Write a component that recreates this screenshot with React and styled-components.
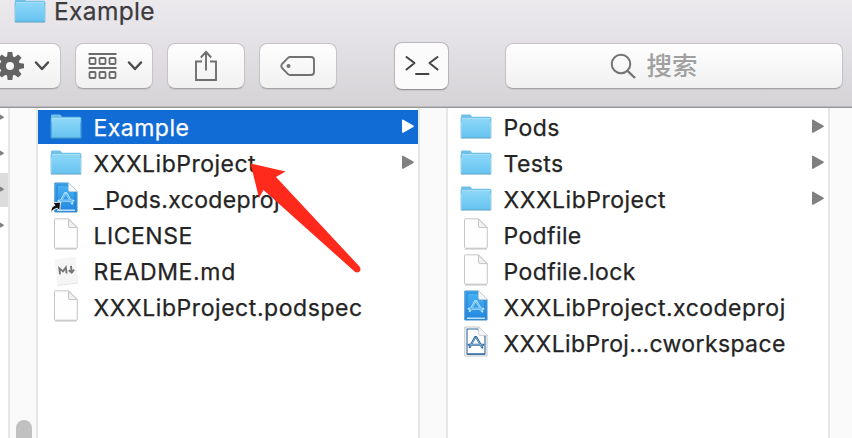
import React from "react";
import styled, { createGlobalStyle } from "styled-components";

const GlobalStyle = createGlobalStyle`
  * { box-sizing: border-box; }
  body { margin: 0; overflow: hidden; background: #fff; font-family: Inter, "Noto Sans CJK SC", sans-serif; }
  svg { display: block; flex: none; }
`;

const Window = styled.div`
  position: relative;
  width: 852px;
  height: 438px;
  overflow: hidden;
  display: flex;
  flex-direction: column;
  background: #fff;
`;

const Header = styled.header`
  flex: none;
  height: 108px;
  overflow: hidden;
  background: linear-gradient(#ebe9ec 0, #e6e4e8 30px, #d5d3d6 106px);
  border-bottom: 1px solid #979698;
  box-shadow: inset 0 -1px #bbb9bc;
`;

const TitleBar = styled.div`
  display: flex;
  align-items: flex-start;
  gap: 6px;
  height: 26px;
  padding-left: 14px;
  > svg { margin-top: -6px; }
`;

const Title = styled.span`
  font-size: 24.5px;
  line-height: 23px;
  letter-spacing: 0.35px;
  color: #3d3b3e;
  -webkit-text-stroke: 0.25px currentColor;
`;

const Toolbar = styled.div`
  display: flex;
  align-items: center;
  width: 860px;
  height: 48px;
  margin: 16px 0 0 -17px;
`;

const ToolButton = styled.div`
  display: flex;
  align-items: center;
  justify-content: center;
  flex: none;
  width: 78px;
  height: 46px;
  margin-right: 14px;
  border: 1px solid #c6c4c7;
  border-bottom-color: #a5a3a6;
  border-radius: 8px;
  background: linear-gradient(#fefefe, #f1f1f1);
  box-shadow: 0 1px 1px rgba(0, 0, 0, 0.08);
`;

const MenuButton = styled(ToolButton)`
  gap: 10px;
  padding-left: 2px;
`;

const TerminalButton = styled(ToolButton)`
  width: 55px;
  height: 48px;
  margin: 0 56px 0 43px;
  background: #fbfbfb;
  border-color: #b8b6b9;
  border-bottom-color: #949295;
`;

const SearchField = styled(ToolButton)`
  width: 338px;
  margin: 0;
  padding-right: 40px;
  gap: 10px;
  font-size: 25.500px;
  line-height: 30px;
  font-weight: 500;
  color: #a0a0a0;
  span { margin-top: -1px; }
`;

const Browser = styled.main`
  flex: 1;
  min-height: 0;
  display: flex;
`;

const Column = styled.section`
  flex: none;
  width: ${(p) => p.$width}px;
  padding-top: 2px;
  display: flex;
  flex-direction: column;
  gap: 2px;
  overflow: hidden;
`;

const EdgeColumn = styled(Column)`
  padding-top: 0;
  > :first-child { margin-top: -7px; }
`;

const Gutter = styled.div`
  flex: none;
  display: flex;
  flex-direction: column;
  justify-content: flex-end;
  width: 30px;
  padding-left: 6px;
  border: solid #e7e7e7;
  border-width: 0 2px;
  background: #fafafa;
`;

const ScrollThumb = styled.div`
  width: 16px;
  height: 18px;
  border-radius: 8px 8px 0 0;
  background: #c1c1c1;
`;

const Row = styled.div`
  flex: none;
  display: flex;
  align-items: center;
  height: 34px;
  padding: 0 4px 0 12px;
  color: ${(p) => (p.$selected ? "#fff" : "#242424")};
  background: ${(p) => (p.$selected ? "#116cd6" : "transparent")};
`;

const EdgeRow = styled.div`
  flex: none;
  display: flex;
  justify-content: flex-end;
  align-items: center;
  height: 34px;
  padding-right: 4px;
  background: ${(p) => (p.$selected ? "#dcdcdc" : "transparent")};
`;

const Label = styled.span`
  flex: 1;
  padding-top: 2px;
  margin-left: 9.5px;
  font-size: 23px;
  line-height: 34px;
  letter-spacing: ${(p) => p.$spacing}px;
  white-space: nowrap;
  -webkit-text-stroke: 0.25px currentColor;
`;

const PointerArrow = styled.svg`
  position: absolute;
  left: 245px;
  top: 158px;
`;

function FolderIcon() {
  return (
    <svg width="34" height="34" viewBox="0 0 34 34">
      <defs>
        <linearGradient id="folder" x1="0" y1="0" x2="0" y2="1">
          <stop offset="0" stopColor="#8ed8f9" />
          <stop offset="1" stopColor="#67c3f0" />
        </linearGradient>
      </defs>
      <path d="M1 7V5.800Q1 4.500 2.300 4.500H9.500Q10.500 4.500 11.200 5.500L12 6.700H29.800Q31 6.700 31 8V12H1Z" fill="#70c0e7" />
      <path d="M1.400 8H30.600V27.500H1.400Z" fill="url(#folder)" />
      <path d="M1.500 8.500H30.500" stroke="#a4e0fa" />
      <path d="M1 8V27.500H31V8" fill="none" stroke="#5fb4dc" strokeWidth=".7" />
      <path d="M1 28H31" stroke="#55a4ca" strokeWidth="1" />
    </svg>
  );
}

function FileIcon() {
  return (
    <svg width="34" height="34" viewBox="0 0 34 34">
      <path d="M5.300 .8H18.500L27.300 9.600V29.200Q27.300 30.200 26.300 30.200H5.300Q4.500 30.200 4.500 29.200V1.700Q4.500 .8 5.300 .8Z" fill="#fefefe" stroke="#c6c6c6" />
      <path d="M4.800 31H27" stroke="#b5b5b5" strokeWidth=".8" />
      <path d="M18.500 1V8Q18.500 9.600 20 9.600H27Z" fill="#f2f2f2" stroke="#bdbdbd" strokeWidth=".9" />
    </svg>
  );
}

function XcodeIcon({ kind = "project", alias = false }) {
  const project = kind === "project";
  const ink = project ? "#b9e6ff" : "#2c689c";
  return (
    <svg width="34" height="34" viewBox="0 0 34 34">
      <defs>
        <linearGradient id="xcode" x1="0" y1="0" x2="0" y2="1">
          <stop offset="0" stopColor="#49b5f5" />
          <stop offset="1" stopColor="#2286de" />
        </linearGradient>
      </defs>
      <path d="M4.800 1H18.500L27 9.500V30H4.800Z" fill={project ? "url(#xcode)" : "#fff"} stroke={project ? "#4390cb" : "#bfc3c7"} />
      <path d="M7 28V3H17.700L25 10.500V28Z" fill="none" stroke={project ? "#2584d2" : "#2c689c"} strokeWidth="1.100" />
      <path d="M7 28.200H25" stroke={project ? "#d8f1ff" : "#2c689c"} strokeWidth="1.300" />
      <path d="M18.500 .8V8Q18.500 9.500 20 9.500H27.500Z" fill="#f3f6f8" stroke="#c5cbd0" strokeWidth=".8" />
      <g fill="none" stroke={ink} strokeLinecap="round">
        <path d="M15.200 11L9.800 21M16.200 11L22.200 21.500" strokeWidth="2.100" />
        <path d="M8.500 18.700H23.500" strokeWidth="1.900" />
      </g>
      <path d="M15.200 11.500L10.300 20.500M16.200 11.500L21.800 21M9.500 18.700H22.500" fill="none" stroke={project ? "#3b9de5" : "#9cc5e6"} strokeWidth=".7" />
      {alias && (
        <path d="M1 30.500Q.6 24.500 5 23.300L3 20.800L10.600 20L9.700 28.600L7.300 26.200Q3.500 26.700 1 30.500Z" fill="#111" stroke="#fff" strokeWidth=".9" />
      )}
    </svg>
  );
}

function MarkdownIcon() {
  return (
    <svg width="34" height="34" viewBox="0 0 34 34">
      <g transform="rotate(-7 16.500 17)">
        <path d="M6 4H27V30H6Z" fill="#f5f5f5" />
        <path d="M6 30.300H27" stroke="#dfdfdf" strokeWidth=".8" />
        <path d="M9.700 19.500V13.500L13 17L16.300 13.500V19.500M21.500 12.500V19M18.800 16.500L21.500 19.300L24.200 16.500" fill="none" stroke="#777" strokeWidth="1.900" />
      </g>
    </svg>
  );
}

function Disclosure({ color = "#808080" }) {
  return (
    <svg width="12" height="16" viewBox="0 0 12 16">
      <path d="M.8 1.400L11 7.200L.8 13Z" fill={color} stroke={color} strokeWidth="1.600" strokeLinejoin="round" />
    </svg>
  );
}

function Chevron() {
  return (
    <svg width="16" height="12" viewBox="0 0 16 12">
      <path d="M2 2.500L8 9L14 2.500" fill="none" stroke="#4c4c4c" strokeWidth="2.500" strokeLinecap="round" strokeLinejoin="round" />
    </svg>
  );
}

const teeth = [0, 45, 90, 135, 180, 225, 270, 315];

function GearIcon() {
  return (
    <svg width="28" height="28" viewBox="-14 -14 28 28">
      <circle r="7" fill="none" stroke="#636363" strokeWidth="6" />
      {teeth.map((a) => (
        <path key={a} d="M-3.200 -8L-2.300 -14H2.300L3.200 -8Z" transform={`rotate(${a})`} fill="#636363" />
      ))}
    </svg>
  );
}

function ArrangeIcon() {
  return (
    <svg width="29" height="28" viewBox="0 0 29 28">
      <path d="M.5 2H28.500M.5 16H28.500" stroke="#6b6b6b" strokeWidth="1.800" />
      {[6, 20].map((y) =>
        [1.5, 11.5, 21.5].map((x) => (
          <rect key={`${x}-${y}`} x={x} y={y} width="6" height="6" rx="1" fill="none" stroke="#6b6b6b" strokeWidth="1.800" />
        ))
      )}
    </svg>
  );
}

function ShareIcon() {
  return (
    <svg width="24" height="32" viewBox="0 0 24 32">
      <path d="M8 11.500H2V30H22V11.500H16M12 20.500V2.500M6.800 7.500L12 2L17.200 7.500" fill="none" stroke="#6f6f6f" strokeWidth="1.900" />
    </svg>
  );
}

function TagIcon() {
  return (
    <svg width="36" height="22" viewBox="0 0 36 22">
      <path d="M10 2H31Q34 2 34 5V17Q34 20 31 20H10Q8.800 20 8 19.200L2 13Q.7 11 2 9L8 2.800Q8.800 2 10 2Z" fill="none" stroke="#717171" strokeWidth="1.900" />
      <circle cx="8.500" cy="11" r="2" fill="#717171" />
    </svg>
  );
}

function TerminalIcon() {
  return (
    <svg width="36" height="24" viewBox="0 0 36 24">
      <path d="M2.500 3L10.500 9L2.500 15.500M33.500 3L25.500 9L33.500 15.500M12 20H24.500" fill="none" stroke="#444" strokeWidth="2" strokeLinecap="round" strokeLinejoin="round" />
    </svg>
  );
}

function SearchIcon() {
  return (
    <svg width="26" height="28" viewBox="0 0 26 28">
      <circle cx="11" cy="12" r="9.300" fill="none" stroke="#747474" strokeWidth="2" />
      <path d="M17.500 18.800L25 26" stroke="#747474" strokeWidth="2.300" />
    </svg>
  );
}

const icons = {
  folder: <FolderIcon />,
  file: <FileIcon />,
  project: <XcodeIcon />,
  alias: <XcodeIcon alias />,
  workspace: <XcodeIcon kind="workspace" />,
  markdown: <MarkdownIcon />,
};

const rootFiles = [
  { name: "Example", icon: "folder", spacing: 0.48, selected: true },
  { name: "XXXLibProject", icon: "folder", spacing: 0.5 },
  { name: "_Pods.xcodeproj", icon: "alias", spacing: 0.38 },
  { name: "LICENSE", icon: "file", spacing: 0.5 },
  { name: "README.md", icon: "markdown", spacing: 0.65 },
  { name: "XXXLibProject.podspec", icon: "file", spacing: 0.56 },
];

const exampleFiles = [
  { name: "Pods", icon: "folder", spacing: 0.4 },
  { name: "Tests", icon: "folder", spacing: 0.4 },
  { name: "XXXLibProject", icon: "folder", spacing: 0.5 },
  { name: "Podfile", icon: "file", spacing: 0.38 },
  { name: "Podfile.lock", icon: "file", spacing: 0.42 },
  { name: "XXXLibProject.xcodeproj", icon: "project", spacing: 0.49 },
  { name: "XXXLibProj…cworkspace", icon: "workspace", spacing: 0.37 },
];

function FileColumn({ files }) {
  return (
    <Column $width={380}>
      {files.map((f) => (
        <Row key={f.name} $selected={f.selected}>
          {icons[f.icon]}
          <Label $spacing={f.spacing}>{f.name}</Label>
          {f.icon === "folder" && <Disclosure color={f.selected ? "#fff" : undefined} />}
        </Row>
      ))}
    </Column>
  );
}

export default function App() {
  return (
    <Window>
      <GlobalStyle />
      <Header>
        <TitleBar>
          <FolderIcon />
          <Title>Example</Title>
        </TitleBar>
        <Toolbar>
          <MenuButton><GearIcon /><Chevron /></MenuButton>
          <MenuButton><ArrangeIcon /><Chevron /></MenuButton>
          <ToolButton><ShareIcon /></ToolButton>
          <ToolButton><TagIcon /></ToolButton>
          <TerminalButton><TerminalIcon /></TerminalButton>
          <SearchField><SearchIcon /><span>搜索</span></SearchField>
        </Toolbar>
      </Header>
      <Browser>
        <EdgeColumn $width={8}>
          {[0, 1, 2, 3].map((i) => (
            <EdgeRow key={i} $selected={i === 2}><Disclosure /></EdgeRow>
          ))}
        </EdgeColumn>
        <Gutter><ScrollThumb /></Gutter>
        <FileColumn files={rootFiles} />
        <Gutter />
        <FileColumn files={exampleFiles} />
        <Gutter />
      </Browser>
      <PointerArrow width="120" height="120" viewBox="245 158 120 120">
        <path d="M250.500 163.500L285.500 171.500L276 177L359.500 266.500Q361.500 269.500 359.500 271.500Q356.500 273.500 354 271L263.500 190L259 198Z" fill="#ff2a1b" />
      </PointerArrow>
    </Window>
  );
}
